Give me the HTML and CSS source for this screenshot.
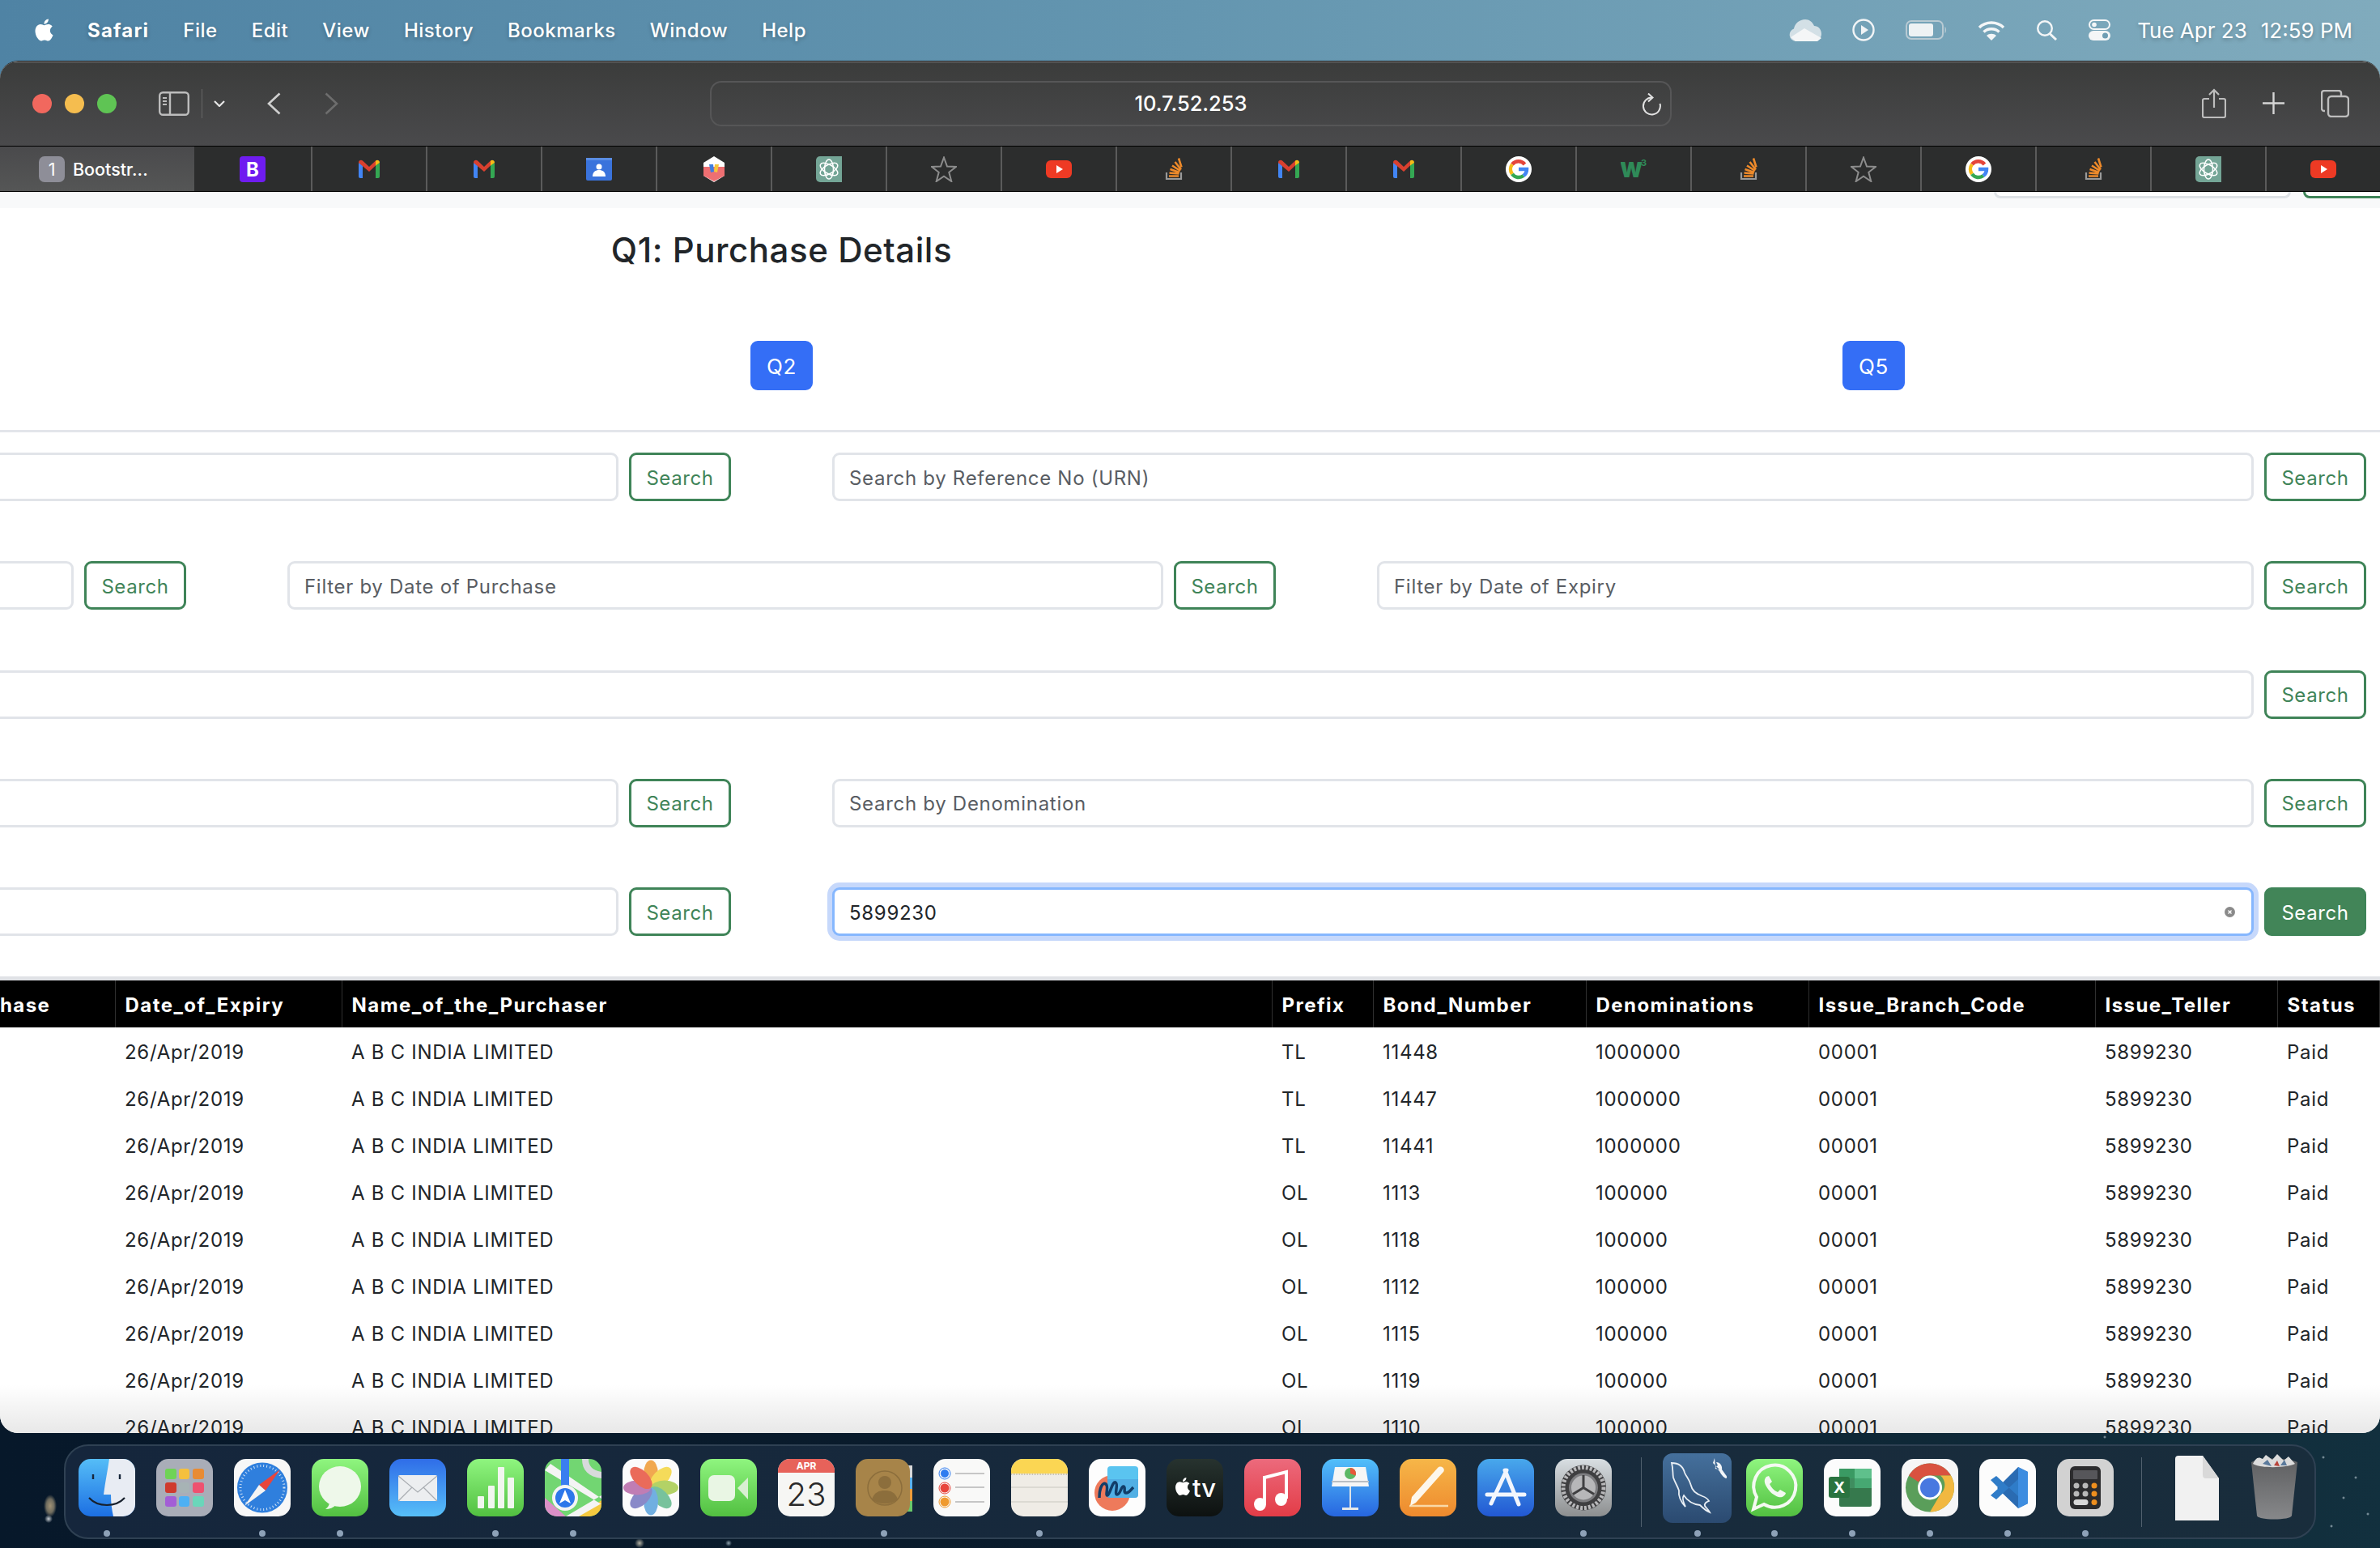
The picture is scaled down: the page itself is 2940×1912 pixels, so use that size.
FILE: index.html
```html
<!DOCTYPE html>
<html lang="en">
<head>
    <meta charset="UTF-8">
    <title>Q1: Purchase Details</title>
    <link rel="stylesheet" href="styles.css">
</head>
<body>
    <!-- shared gradients and favicons -->
    <svg class="defs" width="0" height="0">
        <defs>
            <linearGradient id="gFinder" x1="0" y1="0" x2="0" y2="1"><stop offset="0" stop-color="#55bdf7"/><stop offset="1" stop-color="#1c6fe3"/></linearGradient>
            <linearGradient id="gGreen" x1="0" y1="0" x2="0" y2="1"><stop offset="0" stop-color="#8ff57f"/><stop offset="1" stop-color="#52c041"/></linearGradient>
            <linearGradient id="gMail" x1="0" y1="0" x2="0" y2="1"><stop offset="0" stop-color="#2f6de8"/><stop offset="1" stop-color="#57bff8"/></linearGradient>
            <linearGradient id="gKeynote" x1="0" y1="0" x2="0" y2="1"><stop offset="0" stop-color="#52bffa"/><stop offset="1" stop-color="#2766e0"/></linearGradient>
            <linearGradient id="gMusic" x1="0" y1="0" x2="0" y2="1"><stop offset="0" stop-color="#ec6a7c"/><stop offset="1" stop-color="#e33c47"/></linearGradient>
            <linearGradient id="gPages" x1="0" y1="0" x2="0" y2="1"><stop offset="0" stop-color="#f6b648"/><stop offset="1" stop-color="#ee8a2e"/></linearGradient>
            <linearGradient id="gStore" x1="0" y1="0" x2="0" y2="1"><stop offset="0" stop-color="#48a8ec"/><stop offset="1" stop-color="#2258d3"/></linearGradient>
            <linearGradient id="gGear" x1="0" y1="0" x2="0" y2="1"><stop offset="0" stop-color="#d8dee2"/><stop offset="1" stop-color="#8d8f90"/></linearGradient>
            <linearGradient id="gTv" x1="0" y1="0" x2="0" y2="1"><stop offset="0" stop-color="#27332f"/><stop offset="1" stop-color="#0d1110"/></linearGradient>
            <linearGradient id="gMysql" x1="0" y1="0" x2="0" y2="1"><stop offset="0" stop-color="#45709c"/><stop offset="1" stop-color="#2b4a70"/></linearGradient>
            <linearGradient id="gBin" x1="0" y1="0" x2="0" y2="1"><stop offset="0" stop-color="#5e5f61"/><stop offset="1" stop-color="#87888a"/></linearGradient>
            <symbol id="apple" viewBox="0 0 24 24"><path d="M12.152 6.896c-.948 0-2.415-1.078-3.96-1.04-2.04.027-3.91 1.183-4.961 3.014-2.117 3.675-.546 9.103 1.519 12.09 1.013 1.454 2.208 3.09 3.792 3.039 1.52-.065 2.09-.987 3.935-.987 1.831 0 2.35.987 3.96.948 1.637-.026 2.676-1.48 3.676-2.948 1.156-1.688 1.636-3.325 1.662-3.415-.039-.013-3.182-1.221-3.22-4.857-.026-3.04 2.48-4.494 2.597-4.559-1.429-2.09-3.623-2.324-4.39-2.376-2-.156-3.675 1.09-4.61 1.09zM15.53 3.83c.843-1.012 1.4-2.427 1.245-3.83-1.207.052-2.662.805-3.532 1.818-.78.896-1.454 2.338-1.273 3.714 1.338.104 2.715-.688 3.559-1.701"/></symbol>
            <symbol id="fav-boot" viewBox="0 0 32 32"><rect width="32" height="32" rx="4" fill="#6f1cf0"/><text x="16" y="25" text-anchor="middle" class="fav-text" fill="#fff">B</text></symbol>
            <symbol id="fav-gmail" viewBox="0 0 32 32"><path d="M3 8v17a2 2 0 0 0 2 2h3V11z" fill="#4285f4"/><path d="M29 8v17a2 2 0 0 1-2 2h-3V11z" fill="#34a853"/><path d="M3 8c0-3 3-4 5-2.500l8 7.500 8-7.500 0 6-8 7.500-13-11z" fill="#d9402f"/><path d="M24 5.500c2-1.500 5-.5 5 2.500l-5 3.500z" fill="#f6bb18"/></symbol>
            <symbol id="fav-contacts" viewBox="0 0 32 32"><rect x="0" y="2" width="32" height="28" rx="2" fill="#3a73dc"/><rect x="0" y="2" width="32" height="3" fill="#5a8de4"/><circle cx="16" cy="13" r="3.500" fill="#fff"/><path d="M8 25c0-6 4-8 8-8s8 2 8 8z" fill="#fff"/></symbol>
            <symbol id="fav-hex" viewBox="0 0 32 32"><path d="M16 0l13 8v16l-13 8-13-8V8z" fill="#fff"/><path d="M3 13h26v11l-13 7-13-7z" fill="#ee6f72"/><path d="M10 10l5 0 1 9-4 1z" fill="#3f7fe0"/><path d="M22 10l-5 0-1 9 4 1z" fill="#f4c63d"/></symbol>
            <symbol id="fav-gpt" viewBox="0 0 32 32"><path d="M5 0h27v32H5a5 5 0 0 1-5-5V5a5 5 0 0 1 5-5z" fill="#74a596"/><g fill="none" stroke="#fff" stroke-width="1.500"><ellipse cx="16" cy="16" rx="5.500" ry="12"/><ellipse cx="16" cy="16" rx="5.500" ry="12" transform="rotate(60 16 16)"/><ellipse cx="16" cy="16" rx="5.500" ry="12" transform="rotate(120 16 16)"/></g></symbol>
            <symbol id="fav-star" viewBox="0 0 32 32"><path d="M16 1.500l4 11 11 .5-8.700 6.800 3 11.200-9.300-6.400-9.300 6.400 3-11.200L1 13l11-.5z" fill="none" stroke="#8d8d8d" stroke-width="2"/></symbol>
            <symbol id="fav-yt" viewBox="0 0 32 32"><rect y="5" width="32" height="22" rx="6" fill="#ee3a24"/><path d="M13 11l8 5-8 5z" fill="#fff"/></symbol>
            <symbol id="fav-so" viewBox="0 0 32 32"><path d="M7 20v8h18v-8" fill="none" stroke="#9a9a9a" stroke-width="2.200"/><g stroke="#ee8a2a" stroke-width="2.600"><path d="M10 24.500h12M10.500 20.500l12 1M11.500 16l11.500 4M14 11.500l10 6.500M17.500 7l7.500 9.500M22 2.500l3.500 11"/></g></symbol>
            <symbol id="fav-google" viewBox="0 0 32 32"><circle cx="16" cy="16" r="16" fill="#fff"/><g fill="none" stroke-width="4.500"><path d="M23.500 10a10 10 0 0 0-15.500 0" stroke="#e5453a"/><path d="M8 10a10 10 0 0 0 0 12" stroke="#f6bb18"/><path d="M8 22a10 10 0 0 0 14 2" stroke="#34a853"/><path d="M22 24a10 10 0 0 0 4-8H16" stroke="#4285f4"/></g></symbol>
            <symbol id="fav-w3" viewBox="0 0 32 32"><text x="-1" y="26" class="fav-w" fill="#2f8a58">W</text><text x="25" y="12" class="fav-w3" fill="#2f8a58">3</text></symbol>
        </defs>
    </svg>

    <header class="menubar">
        <nav class="menu-left">
            <svg class="apple-logo"><use href="#apple"/></svg>
            <span class="menu-app">Safari</span>
            <span>File</span>
            <span>Edit</span>
            <span>View</span>
            <span>History</span>
            <span>Bookmarks</span>
            <span>Window</span>
            <span>Help</span>
        </nav>
        <div class="menu-right">
            <svg width="40" height="27" viewBox="0 0 40 27"><path d="M8 27a8 8 0 0 1-2-15.500C7 5 13 0 20 0c5 0 9 3 11 8 5 0 9 4 9 10 0 5-4 9-9 9z" fill="#d3e0e6"/><path d="M2 22l17-11 21 12-5 4H8z" fill="#f4f6f7"/></svg>
            <svg width="28" height="28" viewBox="0 0 28 28"><circle cx="14" cy="14" r="12.500" fill="none" stroke="#f1f4f6" stroke-width="2.400"/><path d="M11 8l9 6-9 6z" fill="#f1f4f6"/></svg>
            <svg width="51" height="24" viewBox="0 0 51 24"><rect x="1" y="1" width="45" height="22" rx="6" fill="none" stroke="#b8cad3" stroke-width="2"/><rect x="4" y="4" width="30" height="16" rx="3" fill="#eef2f4"/><path d="M48.500 8c2 1 2 7 0 8z" fill="#b8cad3"/></svg>
            <svg width="34" height="25" viewBox="0 0 34 25"><g fill="none" stroke="#f4f6f7" stroke-width="3.400"><path d="M2 9c8-8 22-8 30 0"/><path d="M7.500 14.500c5-5 14-5 19 0"/></g><path d="M11 19c3-3 9-3 12 0l-6 6z" fill="#f4f6f7"/></svg>
            <svg width="27" height="25" viewBox="0 0 27 25"><circle cx="11" cy="10" r="8.800" fill="none" stroke="#f4f6f7" stroke-width="2.400"/><path d="M17 16.500l8 7.500" stroke="#f4f6f7" stroke-width="3"/></svg>
            <svg width="27" height="26" viewBox="0 0 27 26"><rect x="1" y="1" width="25" height="11" rx="5.500" fill="none" stroke="#f4f6f7" stroke-width="2"/><circle cx="7" cy="6.500" r="2.800" fill="#f4f6f7"/><rect y="14" width="27" height="12" rx="6" fill="#f4f6f7"/><circle cx="20.500" cy="20" r="3.500" fill="#6f9db3"/></svg>
            <span class="clock-date">Tue Apr 23</span>
            <span class="clock-time">12:59 PM</span>
        </div>
    </header>

    <main class="window">
        <div class="toolbar">
            <div class="traffic">
                <span class="light light-red"></span>
                <span class="light light-yellow"></span>
                <span class="light light-green"></span>
            </div>
            <svg class="tb-sidebar" width="38" height="30" viewBox="0 0 38 30"><rect x="1.200" y="1.200" width="35.600" height="27.600" rx="4" fill="none" stroke="#bdbdbd" stroke-width="2.400"/><path d="M14 1v28" stroke="#bdbdbd" stroke-width="2.400"/><path d="M5 8h5M5 12h5M5 16h5" stroke="#bdbdbd" stroke-width="2"/></svg>
            <span class="tb-sep"></span>
            <svg class="tb-chevron" width="14" height="8" viewBox="0 0 14 8"><path d="M1 1l6 6 6-6" fill="none" stroke="#e6e6e6" stroke-width="2.200"/></svg>
            <svg class="tb-back" width="17" height="28" viewBox="0 0 17 28"><path d="M15.500 1.500L2 14l13.500 12.500" fill="none" stroke="#cfcfcf" stroke-width="2.600"/></svg>
            <svg class="tb-forward" width="17" height="28" viewBox="0 0 17 28"><path d="M1.500 1.500L15 14 1.500 26.500" fill="none" stroke="#6d6d6d" stroke-width="2.600"/></svg>
            <div class="address">
                <span class="address-text">10.7.52.253</span>
                <svg class="address-reload" width="24" height="28" viewBox="0 0 24 28"><path d="M13 5.500A10.500 10.500 0 1 0 22.500 13" fill="none" stroke="#e2e2e2" stroke-width="2"/><path d="M8 .5l5.500 5-5.500 5" fill="none" stroke="#e2e2e2" stroke-width="2"/></svg>
            </div>
            <div class="tb-right">
                <svg width="30" height="37" viewBox="0 0 30 37"><path d="M9 13H3a2 2 0 0 0-2 2v19a2 2 0 0 0 2 2h24a2 2 0 0 0 2-2V15a2 2 0 0 0-2-2h-6" fill="none" stroke="#bdbdbd" stroke-width="2.200"/><path d="M15 24V2M9 8l6-6 6 6" fill="none" stroke="#bdbdbd" stroke-width="2.200"/></svg>
                <svg width="27" height="27" viewBox="0 0 27 27"><path d="M13.500 0v27M0 13.500h27" stroke="#d5d5d5" stroke-width="2.400"/></svg>
                <svg width="35" height="34" viewBox="0 0 35 34"><rect x="9" y="8" width="25" height="25" rx="4" fill="none" stroke="#bdbdbd" stroke-width="2.400"/><path d="M5 26H4a3 3 0 0 1-3-3V4a3 3 0 0 1 3-3h18a3 3 0 0 1 3 3v3" fill="none" stroke="#bdbdbd" stroke-width="2.400"/></svg>
            </div>
        </div>

        <div class="tabbar">
            <div class="tab-active"><span class="tab-badge">1</span><span class="tab-title">Bootstr...</span></div>
            <div class="tab tab-first"><svg class="fav"><use href="#fav-boot"/></svg></div>
            <div class="tab"><svg class="fav"><use href="#fav-gmail"/></svg></div>
            <div class="tab"><svg class="fav"><use href="#fav-gmail"/></svg></div>
            <div class="tab"><svg class="fav"><use href="#fav-contacts"/></svg></div>
            <div class="tab"><svg class="fav"><use href="#fav-hex"/></svg></div>
            <div class="tab"><svg class="fav"><use href="#fav-gpt"/></svg></div>
            <div class="tab"><svg class="fav"><use href="#fav-star"/></svg></div>
            <div class="tab"><svg class="fav"><use href="#fav-yt"/></svg></div>
            <div class="tab"><svg class="fav"><use href="#fav-so"/></svg></div>
            <div class="tab"><svg class="fav"><use href="#fav-gmail"/></svg></div>
            <div class="tab"><svg class="fav"><use href="#fav-gmail"/></svg></div>
            <div class="tab"><svg class="fav"><use href="#fav-google"/></svg></div>
            <div class="tab"><svg class="fav"><use href="#fav-w3"/></svg></div>
            <div class="tab"><svg class="fav"><use href="#fav-so"/></svg></div>
            <div class="tab"><svg class="fav"><use href="#fav-star"/></svg></div>
            <div class="tab"><svg class="fav"><use href="#fav-google"/></svg></div>
            <div class="tab"><svg class="fav"><use href="#fav-so"/></svg></div>
            <div class="tab"><svg class="fav"><use href="#fav-gpt"/></svg></div>
            <div class="tab"><svg class="fav"><use href="#fav-yt"/></svg></div>
        </div>

        <div class="page">
            <div class="top-nav">
                <span class="top-nav-input"></span>
                <span class="top-nav-btn"></span>
            </div>

            <div class="q-grid">
                <h3 class="page-title">Q1: Purchase Details</h3>
                <span></span>
                <a class="btn-q">Q2</a>
                <a class="btn-q">Q5</a>
            </div>

            <hr class="divider">

            <div class="search-rows">
                <div class="search-row cols-2">
                    <div class="search-group"><input class="field"><button class="btn-search">Search</button></div>
                    <div class="search-group"><input class="field" placeholder="Search by Reference No (URN)"><button class="btn-search">Search</button></div>
                </div>
                <div class="search-row cols-3">
                    <div class="search-group"><input class="field"><button class="btn-search">Search</button></div>
                    <div class="search-group"><input class="field" placeholder="Filter by Date of Purchase"><button class="btn-search">Search</button></div>
                    <div class="search-group"><input class="field" placeholder="Filter by Date of Expiry"><button class="btn-search">Search</button></div>
                </div>
                <div class="search-row">
                    <div class="search-group"><input class="field"><button class="btn-search">Search</button></div>
                </div>
                <div class="search-row cols-2">
                    <div class="search-group"><input class="field"><button class="btn-search">Search</button></div>
                    <div class="search-group"><input class="field" placeholder="Search by Denomination"><button class="btn-search">Search</button></div>
                </div>
                <div class="search-row cols-2">
                    <div class="search-group"><input class="field"><button class="btn-search">Search</button></div>
                    <div class="search-group">
                        <div class="field-wrap">
                            <input class="field field-focus" value="5899230">
                            <svg class="field-clear" width="13" height="13" viewBox="0 0 13 13"><circle cx="6.500" cy="6.500" r="6.500" fill="#8a8a8a"/><path d="M4.500 4.500l4 4M8.500 4.500l-4 4" stroke="#fff" stroke-width="1.300"/></svg>
                        </div>
                        <button class="btn-search btn-search-hover">Search</button>
                    </div>
                </div>
            </div>

            <div class="table-rule"></div>
            <table class="bonds">
                <colgroup>
                    <col class="c-purchase"><col class="c-expiry"><col class="c-name"><col class="c-prefix"><col class="c-bond"><col class="c-denom"><col class="c-branch"><col class="c-teller"><col class="c-status">
                </colgroup>
                <thead>
                    <tr><th>Date_of_Purchase</th><th>Date_of_Expiry</th><th>Name_of_the_Purchaser</th><th>Prefix</th><th>Bond_Number</th><th>Denominations</th><th>Issue_Branch_Code</th><th>Issue_Teller</th><th>Status</th></tr>
                </thead>
                <tbody>
                    <tr><td>26/Apr/2016</td><td>26/Apr/2019</td><td>A B C INDIA LIMITED</td><td>TL</td><td>11448</td><td>1000000</td><td>00001</td><td>5899230</td><td>Paid</td></tr>
                    <tr><td>26/Apr/2016</td><td>26/Apr/2019</td><td>A B C INDIA LIMITED</td><td>TL</td><td>11447</td><td>1000000</td><td>00001</td><td>5899230</td><td>Paid</td></tr>
                    <tr><td>26/Apr/2016</td><td>26/Apr/2019</td><td>A B C INDIA LIMITED</td><td>TL</td><td>11441</td><td>1000000</td><td>00001</td><td>5899230</td><td>Paid</td></tr>
                    <tr><td>26/Apr/2016</td><td>26/Apr/2019</td><td>A B C INDIA LIMITED</td><td>OL</td><td>1113</td><td>100000</td><td>00001</td><td>5899230</td><td>Paid</td></tr>
                    <tr><td>26/Apr/2016</td><td>26/Apr/2019</td><td>A B C INDIA LIMITED</td><td>OL</td><td>1118</td><td>100000</td><td>00001</td><td>5899230</td><td>Paid</td></tr>
                    <tr><td>26/Apr/2016</td><td>26/Apr/2019</td><td>A B C INDIA LIMITED</td><td>OL</td><td>1112</td><td>100000</td><td>00001</td><td>5899230</td><td>Paid</td></tr>
                    <tr><td>26/Apr/2016</td><td>26/Apr/2019</td><td>A B C INDIA LIMITED</td><td>OL</td><td>1115</td><td>100000</td><td>00001</td><td>5899230</td><td>Paid</td></tr>
                    <tr><td>26/Apr/2016</td><td>26/Apr/2019</td><td>A B C INDIA LIMITED</td><td>OL</td><td>1119</td><td>100000</td><td>00001</td><td>5899230</td><td>Paid</td></tr>
                    <tr><td>26/Apr/2016</td><td>26/Apr/2019</td><td>A B C INDIA LIMITED</td><td>OL</td><td>1110</td><td>100000</td><td>00001</td><td>5899230</td><td>Paid</td></tr>
                </tbody>
            </table>
            <div class="page-fade"></div>
        </div>
    </main>

    <footer class="dock">
        <!-- finder -->
        <div class="dock-item running"><svg class="app" viewBox="0 0 70 71"><rect width="70" height="71" rx="15" fill="url(#gFinder)"/><path d="M38 0h17a15 15 0 0 1 15 15v41a15 15 0 0 1-15 15H43c-2-9-3-17-3-27h-9c2-16 5-30 7-44z" fill="#e8ecf3"/><path d="M18 19v6M51 19v6" stroke="#17263a" stroke-width="2.400"/><path d="M13 48c11 12 33 12 44 0" fill="none" stroke="#17202c" stroke-width="2.200"/></svg></div>
        <!-- launchpad -->
        <div class="dock-item"><svg class="app" viewBox="0 0 70 71"><rect width="70" height="71" rx="15" fill="#a9adb8"/><rect x="11" y="12" width="14" height="13" rx="3" fill="#6fd356"/><rect x="28" y="12" width="13" height="13" rx="3" fill="#f5c03e"/><rect x="45" y="12" width="14" height="13" rx="3" fill="#e88b34"/><rect x="11" y="29" width="14" height="13" rx="3" fill="#cf3a2d"/><rect x="28" y="29" width="13" height="13" rx="3" fill="#a7b3b5"/><rect x="45" y="29" width="14" height="13" rx="3" fill="#ee5170"/><rect x="11" y="46" width="14" height="13" rx="3" fill="#a35ed6"/><rect x="28" y="46" width="13" height="13" rx="3" fill="#4db0f4"/><rect x="45" y="46" width="14" height="13" rx="3" fill="#6ad6ba"/></svg></div>
        <!-- safari -->
        <div class="dock-item running"><svg class="app" viewBox="0 0 70 71"><rect width="70" height="71" rx="15" fill="#f7f7f7"/><circle cx="35" cy="35.500" r="31" fill="#2f7fdd"/><circle cx="35" cy="35.500" r="27" fill="none" stroke="#cfe2f6" stroke-width="3" stroke-dasharray="1 3"/><path d="M57 13L31 32l8 7z" fill="#e8453c"/><path d="M13 58l18-26 8 7z" fill="#f4f4f4"/></svg></div>
        <!-- messages -->
        <div class="dock-item running"><svg class="app" viewBox="0 0 70 71"><rect width="70" height="71" rx="15" fill="url(#gGreen)"/><ellipse cx="35" cy="34" rx="26" ry="25" fill="#eef8ea"/><path d="M22 53c0 4-2 7-5 9 5 0 10-2 13-5z" fill="#eef8ea"/></svg></div>
        <!-- mail -->
        <div class="dock-item"><svg class="app" viewBox="0 0 70 71"><rect width="70" height="71" rx="15" fill="url(#gMail)"/><rect x="11" y="20" width="48" height="32" rx="2" fill="#eceef0"/><path d="M11 21l24 20 24-20M11 52l17-17M59 52L42 35" fill="none" stroke="#a9adb2" stroke-width="1.200"/></svg></div>
        <!-- numbers -->
        <div class="dock-item running"><svg class="app" viewBox="0 0 70 71"><rect width="70" height="71" rx="15" fill="url(#gGreen)"/><rect x="13" y="46" width="8" height="15" rx="1" fill="#f1f6ee"/><rect x="26" y="33" width="8" height="28" rx="1" fill="#f1f6ee"/><rect x="38" y="10" width="8" height="51" rx="1" fill="#f1f6ee"/><rect x="50" y="23" width="8" height="38" rx="1" fill="#f1f6ee"/></svg></div>
        <!-- maps -->
        <div class="dock-item running"><svg class="app" viewBox="0 0 70 71"><rect width="70" height="71" rx="15" fill="#72d672"/><path d="M0 48l26 23H15A15 15 0 0 1 0 56z" fill="#dc8fc8"/><path d="M42 71l28-20v5a15 15 0 0 1-15 15z" fill="#f5c93f"/><path d="M0 14l70 42v-7L7 6zM26 71l44-26v10L42 71z" fill="#f4f4f4"/><path d="M46 0c0 14 8 22 24 24v-8C58 14 54 8 54 0z" fill="#d8dadc"/><rect x="20" width="10" height="36" fill="#3a7ef0"/><circle cx="25" cy="48" r="16" fill="#f4f4f4"/><circle cx="25" cy="48" r="12" fill="#2d77ea"/><path d="M25 38l7 17-7-4-7 4z" fill="#fff"/></svg></div>
        <!-- photos -->
        <div class="dock-item"><svg class="app" viewBox="0 0 70 71"><rect width="70" height="71" rx="15" fill="#fbfbfb"/><g transform="translate(35 35.500)" opacity=".85"><ellipse cy="-17" rx="9" ry="17" fill="#f09a33"/><ellipse cy="-17" rx="9" ry="17" fill="#f5d63f" transform="rotate(45)"/><ellipse cy="-17" rx="9" ry="17" fill="#a7cc4d" transform="rotate(90)"/><ellipse cy="-17" rx="9" ry="17" fill="#62b98c" transform="rotate(135)"/><ellipse cy="-17" rx="9" ry="17" fill="#5aa2dd" transform="rotate(180)"/><ellipse cy="-17" rx="9" ry="17" fill="#7676c0" transform="rotate(225)"/><ellipse cy="-17" rx="9" ry="17" fill="#b668a8" transform="rotate(270)"/><ellipse cy="-17" rx="9" ry="17" fill="#e8523f" transform="rotate(315)"/></g></svg></div>
        <!-- facetime -->
        <div class="dock-item"><svg class="app" viewBox="0 0 70 71"><rect width="70" height="71" rx="15" fill="url(#gGreen)"/><rect x="10" y="20" width="33" height="32" rx="7" fill="#e9f6e4"/><path d="M46 36l13-13v27z" fill="#d9efd2"/></svg></div>
        <!-- calendar -->
        <div class="dock-item"><svg class="app" viewBox="0 0 70 71"><rect width="70" height="71" rx="15" fill="#f6f6f4"/><path d="M0 17V15A15 15 0 0 1 15 0h40a15 15 0 0 1 15 15v2z" fill="#e7625a"/><text x="35" y="13" text-anchor="middle" class="cal-month">APR</text><text x="35" y="58" text-anchor="middle" class="cal-day">23</text></svg></div>
        <!-- contacts -->
        <div class="dock-item running"><svg class="app" viewBox="0 0 70 71"><rect x="60" y="8" width="10" height="15" fill="#d8d8d8"/><rect x="60" y="23" width="10" height="14" fill="#59b1ee"/><rect x="60" y="37" width="10" height="15" fill="#ee9c3a"/><rect x="60" y="52" width="10" height="13" fill="#6ac96a"/><rect width="67" height="71" rx="15" fill="#a78449"/><circle cx="36" cy="36" r="21" fill="none" stroke="#8c6e3c" stroke-width="1.500"/><circle cx="36" cy="29" r="8" fill="#8c6e3c"/><path d="M20 50c3-9 9-11 16-11s13 2 16 11c-8 7-24 7-32 0z" fill="#8c6e3c"/></svg></div>
        <!-- reminders -->
        <div class="dock-item"><svg class="app" viewBox="0 0 70 71"><rect width="70" height="71" rx="15" fill="#f9f9f8"/><circle cx="14" cy="18" r="5.500" fill="#2f7cf0" stroke="#fff" stroke-width="1"/><circle cx="14" cy="18" r="7" fill="none" stroke="#2f7cf0"/><circle cx="14" cy="36" r="5.500" fill="#e8453c"/><circle cx="14" cy="36" r="7" fill="none" stroke="#e8453c"/><circle cx="14" cy="53" r="5.500" fill="#ef9a2e"/><circle cx="14" cy="53" r="7" fill="none" stroke="#ef9a2e"/><path d="M27 18h36M27 35h36M27 53h36" stroke="#b5b5b5" stroke-width="1.500"/></svg></div>
        <!-- notes -->
        <div class="dock-item running"><svg class="app" viewBox="0 0 70 71"><rect width="70" height="71" rx="15" fill="#efece6"/><path d="M0 18V15A15 15 0 0 1 15 0h40a15 15 0 0 1 15 15v3z" fill="#fbd653"/><path d="M0 19h70" stroke="#c9c3b2" stroke-width="2" stroke-dasharray="1 1"/><path d="M0 35h70M0 53h70" stroke="#d6d3cd" stroke-width="1.500"/></svg></div>
        <!-- freeform -->
        <div class="dock-item"><svg class="app" viewBox="0 0 70 71"><rect width="70" height="71" rx="15" fill="#fdfdfd"/><circle cx="29" cy="42" r="22" fill="#ee7a5b"/><rect x="23" y="9" width="38" height="39" rx="4" fill="#5ac4f0"/><path d="M23 25h38v19a4 4 0 0 1-4 4H23z" fill="#4ba2dc" opacity=".6"/><path d="M13 48c0-12 4-20 8-17s-1 14 2 14 6-18 10-16-2 15 2 15 5-11 8-10-1 8 3 8 6-4 9-7" fill="none" stroke="#123d68" stroke-width="3.500"/></svg></div>
        <!-- apple tv -->
        <div class="dock-item"><svg class="app" viewBox="0 0 70 71"><rect width="70" height="71" rx="15" fill="url(#gTv)"/><use href="#apple" x="9" y="21" width="22" height="26" fill="#fff"/><text x="32" y="47" class="tv-text">tv</text></svg></div>
        <!-- music -->
        <div class="dock-item"><svg class="app" viewBox="0 0 70 71"><rect width="70" height="71" rx="15" fill="url(#gMusic)"/><path d="M25 23l27-7v33" fill="none" stroke="#fff" stroke-width="4"/><path d="M25 21v35" stroke="#fff" stroke-width="4"/><ellipse cx="19.500" cy="56" rx="7.500" ry="8" fill="#fff"/><ellipse cx="45.500" cy="50" rx="7.500" ry="8" fill="#fff"/></svg></div>
        <!-- keynote -->
        <div class="dock-item"><svg class="app" viewBox="0 0 70 71"><rect width="70" height="71" rx="15" fill="url(#gKeynote)"/><path d="M16 10h38l4 24H12z" fill="#f6f6f6"/><rect x="12" y="27" width="46" height="2" fill="#b9bec4"/><circle cx="35" cy="18" r="7" fill="#5db865"/><path d="M35 18V11a7 7 0 0 1 6.500 9.500z" fill="#e8573a"/><path d="M34 34h2v26h-2z" fill="#dfe3e6"/><path d="M25 60h20v3H25z" fill="#e6e9eb"/></svg></div>
        <!-- pages -->
        <div class="dock-item"><svg class="app" viewBox="0 0 70 71"><rect width="70" height="71" rx="15" fill="url(#gPages)"/><path d="M12 58h48" stroke="#f9d9a8" stroke-width="2.500"/><path d="M13 58l2-11 32-36c4-4 10 1 7 5L20 54z" fill="#fdf7ec"/></svg></div>
        <!-- app store -->
        <div class="dock-item"><svg class="app" viewBox="0 0 70 71"><rect width="70" height="71" rx="15" fill="url(#gStore)"/><g stroke="#f2f6fd" stroke-width="5" stroke-linecap="round"><path d="M36 14L17 55M34 14l17 42M12 44h46"/></g></svg></div>
        <!-- settings -->
        <div class="dock-item running"><svg class="app" viewBox="0 0 70 71"><rect width="70" height="71" rx="15" fill="url(#gGear)"/><circle cx="35" cy="35.500" r="28" fill="#3f3f41"/><circle cx="35" cy="35.500" r="25" fill="none" stroke="#b9b9bb" stroke-width="5" stroke-dasharray="3 2"/><circle cx="35" cy="35.500" r="18" fill="#7d7d80"/><circle cx="35" cy="35.500" r="15" fill="#b7b7b9"/><path d="M35 35.500V20M35 35.500l13 8M35 35.500l-13 8" stroke="#3f3f41" stroke-width="3"/></svg></div>

        <span class="dock-sep dock-sep-a"></span>

        <!-- mysql workbench -->
        <div class="dock-item dock-item-tall running"><svg class="app-tall" viewBox="0 0 85 86"><rect width="85" height="86" rx="12" fill="url(#gMysql)"/><path d="M11 12c8 0 14 4 16 12 2 5 6 8 8 16 1 6 6 10 14 13 6 2 7 4 8 6-3 1-6 3-5 6 1 2 4 4 6 8-5-2-10-7-12-9-10-1-16-6-20-12-3 4 0 10 2 14-6-6-9-14-8-20-2-6-5-10-7-16-1-6 0-10-2-18z" fill="none" stroke="#e8eef4" stroke-width="1.800"/><path d="M64 6l-2 6 8 8-1 0c-3-1-5 0-4-3l5 5c2 5 7 9 8 9s2-2 0-4l-5-7c1-4-2-9-7-9l2 4-3 2z" fill="#f2f5f8"/></svg></div>
        <!-- whatsapp -->
        <div class="dock-item dock-item-pull running"><svg class="app" viewBox="0 0 70 71"><rect width="70" height="71" rx="15" fill="url(#gGreen)"/><path d="M9 62l4-15a26 26 0 1 1 9 9z" fill="none" stroke="#f4f9f2" stroke-width="4"/><path d="M25 22c-3 3-3 7 0 12 4 7 9 11 15 13 4 1 8-1 9-5l-7-4-3 3c-5-2-8-6-10-10l3-3-4-7z" fill="#f4f9f2"/></svg></div>
        <!-- excel -->
        <div class="dock-item running"><svg class="app" viewBox="0 0 70 71"><rect width="70" height="71" rx="15" fill="#fcfcfc"/><rect x="19" y="12" width="40" height="47" rx="2" fill="#36794d"/><rect x="38" y="12" width="21" height="12" fill="#5fc08c"/><rect x="19" y="12" width="19" height="12" fill="#3a9a63"/><rect x="38" y="24" width="21" height="12" fill="#46a872"/><rect x="19" y="24" width="19" height="12" fill="#3f8d5f"/><rect x="6" y="22" width="26" height="26" rx="3" fill="#2a7440"/><text x="19" y="42" text-anchor="middle" class="xl-text">X</text></svg></div>
        <!-- chrome -->
        <div class="dock-item running"><svg class="app" viewBox="0 0 70 71"><rect width="70" height="71" rx="15" fill="#f6f6f6"/><circle cx="35" cy="35.500" r="30" fill="#5a9e5a"/><path d="M9 20.500A30 30 0 0 1 61 20.500H35a15 15 0 0 0-14 8z" fill="#d9523f"/><path d="M61 20.500A30 30 0 0 1 35 65.500l13-22a15 15 0 0 0 0-23z" fill="#f1b840"/><circle cx="35" cy="35.500" r="15" fill="#fff"/><circle cx="35" cy="35.500" r="12" fill="#4878e0"/></svg></div>
        <!-- vs code -->
        <div class="dock-item running"><svg class="app" viewBox="0 0 70 71"><rect width="70" height="71" rx="15" fill="#fcfcfc"/><path d="M48 10l12 6v39l-12 6-26-25z" fill="#2a6bb2"/><path d="M48 10l12 6v39l-12 6z" fill="#3d8de0"/><path d="M48 25L21 50l-7-5 10-9-10-10 7-5 27 25z" fill="#2f7cc8"/></svg></div>
        <!-- calculator -->
        <div class="dock-item running"><svg class="app" viewBox="0 0 70 71"><rect width="70" height="71" rx="15" fill="#d2d2d2"/><rect x="16" y="9" width="38" height="53" rx="6" fill="#2c2c2e"/><rect x="20" y="14" width="30" height="11" rx="1" fill="#56565a"/><circle cx="24" cy="33" r="3.500" fill="#b9b9b9"/><circle cx="35" cy="33" r="3.500" fill="#b9b9b9"/><circle cx="46" cy="33" r="3.500" fill="#ef8f1e"/><circle cx="24" cy="43" r="3.500" fill="#b9b9b9"/><circle cx="35" cy="43" r="3.500" fill="#b9b9b9"/><circle cx="46" cy="43" r="3.500" fill="#ef8f1e"/><rect x="20.500" y="50" width="18" height="7" rx="3.500" fill="#d8d8d8"/><circle cx="46" cy="53.500" r="3.500" fill="#ef8f1e"/></svg></div>

        <span class="dock-sep dock-sep-b"></span>

        <!-- document -->
        <div class="dock-item dock-doc"><svg width="54" height="81" viewBox="0 0 54 81"><path d="M4 1h30l20 28v52H0V5a4 4 0 0 1 4-4z" fill="#f1f1f1"/><path d="M34 1l20 28H38a4 4 0 0 1-4-4z" fill="#d9d9d9"/></svg></div>
        <!-- trash -->
        <div class="dock-item dock-trash"><svg width="61" height="81" viewBox="0 0 61 81"><path d="M2 10c12-6 45-6 57 0l-7 66c-1 6-42 6-43 0z" fill="url(#gBin)"/><path d="M4 12c3-6 6-10 12-6l4-5 8 6 6-7 8 8 6-5 8 9c-10 5-42 6-52 0z" fill="#dcdcdc"/><path d="M16 12l6-5 5 8zM38 14l5-7 3 7z" fill="#5b7a9c"/><path d="M30 14l4-6 3 7z" fill="#b8433a"/></svg></div>
    </footer>
</body>
</html>
```

FILE: styles.css
```css
* {
    box-sizing: border-box;
}
html, body {
    margin: 0;
    height: 100%;
}
body {
    width: 2940px;
    height: 1912px;
    overflow: hidden;
    display: flex;
    flex-direction: column;
    font-family: Inter, "Liberation Sans", sans-serif;
    background:
        radial-gradient(ellipse 8px 14px at 62px 1860px, #a09275 0, #6f6c5f 60%, transparent 100%),
        radial-gradient(circle at 60px 1876px, #c9ced2 0, transparent 5px),
        radial-gradient(circle at 790px 1906px, #b5b3a5 0, transparent 6px),
        radial-gradient(circle at 900px 1906px, #8fa3ae 0, transparent 4px),
        radial-gradient(circle at 2870px 1800px, #a9bac3 0, transparent 2px),
        radial-gradient(circle at 2895px 1850px, #a9bac3 0, transparent 2px),
        radial-gradient(circle at 2880px 1885px, #a9bac3 0, transparent 2px),
        radial-gradient(circle at 2910px 1825px, #a9bac3 0, transparent 2px),
        radial-gradient(circle at 2925px 1870px, #a9bac3 0, transparent 2px),
        radial-gradient(circle at 2600px 1775px, #a9bac3 0, transparent 2px),
        linear-gradient(90deg, #4f83a4 0, #6496b0 50%, #80abbd 100%) top / 100% 100px no-repeat,
        linear-gradient(90deg, #07182a 0, #0a1c2c 50%, #12303e 100%);
}
.defs {
    position: absolute;
}
.fav-text {
    font: 700 24px Inter, sans-serif;
}
.fav-w {
    font: 900 26px Inter, sans-serif;
}
.fav-w3 {
    font: 700 11px Inter, sans-serif;
}
.cal-month {
    font: 700 12px Inter, sans-serif;
    fill: #fff;
}
.cal-day {
    font: 300 40px Inter, sans-serif;
    fill: #2a2a2a;
}
.tv-text {
    font: 500 31px Inter, sans-serif;
    fill: #fff;
}
.xl-text {
    font: 700 19px Inter, sans-serif;
    fill: #fff;
}

/* menu bar */
.menubar {
    flex: 0 0 75px;
    display: flex;
    justify-content: space-between;
    align-items: center;
    padding: 0 34px 1px 41px;
    color: #fff;
    font-size: 24px;
    font-weight: 500;
    text-shadow: 0 2px 5px rgba(0, 0, 0, .25);
}
.menu-left {
    display: flex;
    align-items: center;
    letter-spacing: .5px;
}
.menu-left span {
    margin-right: 42px;
}
.menu-left .menu-app {
    font-weight: 700;
    letter-spacing: 1.2px;
}
.apple-logo {
    width: 27px;
    height: 30px;
    fill: #fff;
    margin-right: 40px;
}
.menu-right {
    display: flex;
    align-items: center;
    gap: 38px;
    font-size: 26px;
    font-weight: 400;
}
.menu-right svg {
    flex: none;
}
.clock-date {
    margin-left: -5px;
}
.clock-time {
    margin-left: -21px;
}

/* browser window */
.window {
    flex: 0 0 1695px;
    display: flex;
    flex-direction: column;
    border-radius: 22px;
    overflow: hidden;
    background: #fff;
    border-top: 1px solid #111;
}
.toolbar {
    flex: 0 0 104px;
    display: flex;
    align-items: center;
    position: relative;
    padding-bottom: 2px;
    background: linear-gradient(#3b3c3b, #4a4a4c);
    border-top: 1px solid #8a8a8a;
}
.traffic {
    display: flex;
    gap: 16px;
    margin-left: 40px;
}
.light {
    width: 24px;
    height: 24px;
    border-radius: 50%;
}
.light-red {
    background: #f1685e;
}
.light-yellow {
    background: #f5bd4f;
}
.light-green {
    background: #5fc454;
}
.tb-sidebar {
    margin-left: 52px;
}
.tb-sep {
    width: 1px;
    height: 36px;
    margin-left: 15px;
    background: #666;
}
.tb-chevron {
    margin-left: 14px;
}
.tb-back {
    margin-left: 52px;
}
.tb-forward {
    margin-left: 54px;
}
.address {
    flex: 0 0 1188px;
    height: 56px;
    margin-left: 459px;
    display: flex;
    align-items: center;
    justify-content: center;
    position: relative;
    border: 2px solid #565657;
    border-radius: 14px;
}
.address-text {
    color: #fff;
    font-size: 25.5px;
    font-weight: 500;
}
.address-reload {
    position: absolute;
    right: 11px;
    top: 13px;
}
.tb-right {
    display: flex;
    align-items: center;
    gap: 45px;
    margin-left: 655px;
}

.tabbar {
    flex: 0 0 57px;
    display: flex;
    overflow: hidden;
    background: #2c2d2d;
    border-top: 1px solid #000;
    border-bottom: 1px solid #000;
}
.tab-active {
    flex: 0 0 240px;
    display: flex;
    align-items: center;
    gap: 10px;
    padding-left: 48px;
    background: linear-gradient(#4a4a4c, #555656);
    color: #fff;
    font-size: 21.5px;
    font-weight: 500;
}
.tab-badge {
    width: 32px;
    height: 32px;
    border-radius: 7px;
    background: #8e8e98;
    display: flex;
    align-items: center;
    justify-content: center;
    font-weight: 400;
}
.tab {
    flex: 0 0 142px;
    display: flex;
    align-items: center;
    justify-content: center;
    border-right: 2px solid #5b5b5b;
}
.tab-first {
    flex-basis: 146px;
}
.fav {
    width: 32px;
    height: 32px;
}

/* page */
.page {
    flex: 1;
    min-height: 0;
    position: relative;
    overflow: hidden;
    background: #fff;
    color: #212529;
    font-size: 24px;
}
.top-nav {
    height: 20px;
    display: flex;
    justify-content: flex-end;
    gap: 15px;
    background: #f8f9fa;
    margin-right: -30px;
}
.top-nav-input,
.top-nav-btn {
    height: 8px;
    border: 3px solid #dee2e6;
    border-top: 0;
    border-radius: 0 0 9px 9px;
    background: #fff;
}
.top-nav-input {
    width: 367px;
}
.top-nav-btn {
    width: 125px;
    border-color: #3f8458;
}
.q-grid {
    display: grid;
    grid-template-columns: 1349px 1349px;
    justify-items: center;
    padding: 22px 0 0 291px;
}
.page-title {
    grid-column: 1;
    margin: 0 0 82px;
    height: 60px;
    font-size: 42px;
    line-height: 60px;
    font-weight: 500;
    letter-spacing: .55px;
}
.btn-q {
    width: 77px;
    height: 61px;
    padding-top: 2px;
    display: flex;
    align-items: center;
    justify-content: center;
    border-radius: 9px;
    background: #346ef6;
    color: #fff;
    font-size: 26px;
    letter-spacing: .7px;
}
.divider {
    height: 3px;
    margin: 49px 0 25px;
    border: 0;
    background: #e3e5ea;
}

.search-rows {
    display: flex;
    flex-direction: column;
    gap: 74.25px;
    margin: 0 17px 0 -98px;
}
.search-row {
    display: grid;
    gap: 125px;
}
.cols-2 {
    grid-template-columns: 1001px 1fr;
}
.cols-3 {
    grid-template-columns: 328px 1221px 1fr;
}
.search-group {
    display: flex;
    gap: 13px;
}
.field {
    flex: 1;
    min-width: 0;
    width: 100%;
    height: 60px;
    padding: 2px 18px 0;
    border: 3px solid #e1e4e9;
    border-radius: 9px;
    background: #fff;
    color: #212529;
    font: 400 24px Inter, sans-serif;
    letter-spacing: .7px;
    outline: 0;
}
.field::placeholder {
    color: #595d63;
    opacity: 1;
}
.field-wrap {
    flex: 1;
    position: relative;
    display: flex;
}
.field-focus {
    border-color: #86b7fe;
    box-shadow: 0 0 0 6px #c6d8fb;
}
.field-clear {
    position: absolute;
    right: 23px;
    top: 24px;
}
.btn-search {
    flex: 0 0 126px;
    height: 60px;
    padding: 2px 0 0;
    border: 3px solid #3f8458;
    border-radius: 9px;
    background: #fff;
    color: #3f8458;
    font: 400 24px Inter, sans-serif;
    letter-spacing: .6px;
}
.btn-search-hover {
    background: #428558;
    color: #fff;
}

/* table */
.table-rule {
    height: 5px;
    margin-top: 50px;
    background: #e0e2e6;
}
.bonds {
    table-layout: fixed;
    border-collapse: collapse;
    width: 3124px;
    margin-left: -185px;
}
.c-purchase { width: 327px; }
.c-expiry { width: 280px; }
.c-name { width: 1149px; }
.c-prefix { width: 125px; }
.c-bond { width: 263px; }
.c-denom { width: 275px; }
.c-branch { width: 354px; }
.c-teller { width: 225px; }
.c-status { width: 126px; }
.bonds th,
.bonds td {
    height: 58px;
    padding: 2px 12px 0;
    text-align: left;
    white-space: nowrap;
}
.bonds th {
    background: #000;
    color: #fff;
    font-weight: 700;
    letter-spacing: 1.45px;
    border-right: 1px solid #2f2f2f;
}
.bonds td {
    font-weight: 400;
    color: #212529;
    letter-spacing: .7px;
}
.page-fade {
    position: absolute;
    left: 0;
    right: 0;
    bottom: 0;
    height: 60px;
    background: linear-gradient(rgba(0, 0, 0, 0), rgba(0, 0, 0, .09));
    pointer-events: none;
}

/* dock */
.dock {
    flex: 0 0 117px;
    margin: 14px 79px 0;
    padding: 18px 0 0 16px;
    display: flex;
    align-items: flex-start;
    gap: 26px;
    border: 2px solid #2f4153;
    border-radius: 30px;
    background: linear-gradient(90deg, #15263c, #192d3c);
}
.dock-item {
    position: relative;
    flex: none;
    line-height: 0;
    margin-top: -2px;
}
.app {
    width: 70px;
    height: 71px;
}
.app-tall {
    width: 85px;
    height: 86px;
}
.running::after {
    content: "";
    position: absolute;
    left: 50%;
    top: 88px;
    width: 8px;
    height: 8px;
    margin-left: -4px;
    border-radius: 50%;
    background: #8ea2b8;
}
.dock-item-tall {
    margin-top: -9px;
}
.dock-item-tall.running::after {
    top: 95px;
}
.dock-item-pull {
    margin-left: -8px;
}
.dock-sep {
    flex: none;
    width: 1px;
    height: 86px;
    margin-top: -4px;
    background: #51606e;
}
.dock-sep-a {
    margin-left: 10px;
}
.dock-sep-b {
    margin-left: 8px;
}
.dock-doc {
    margin-left: 15px;
    margin-top: -7px;
}
.dock-trash {
    margin-left: 12px;
    margin-top: -8px;
}
```
